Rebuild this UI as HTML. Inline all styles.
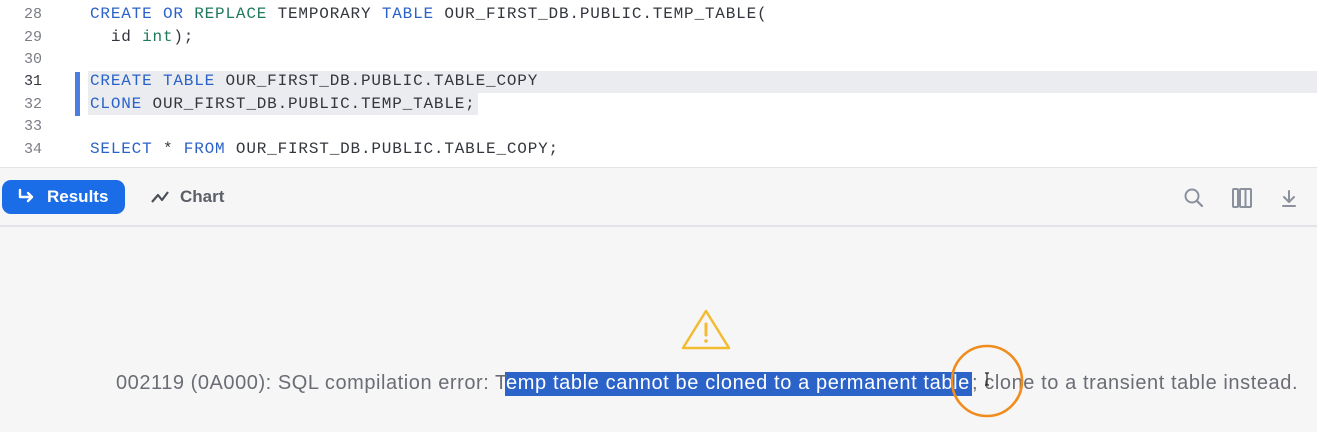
<!DOCTYPE html>
<html><head><meta charset="utf-8"><style>
*{margin:0;padding:0;box-sizing:border-box}
body{width:1317px;height:432px;overflow:hidden;background:#f6f6f7;position:relative;font-family:"Liberation Sans",sans-serif}
.ed{position:absolute;left:0;top:0;width:1317px;height:167px;background:#fff}
.ln{position:absolute;left:0;width:42px;text-align:right;font:15px "Liberation Mono",monospace;color:#7a7d85}
.cd{position:absolute;left:90px;font:16px "Liberation Mono",monospace;letter-spacing:0.82px;color:#33363d;white-space:pre}
.k{color:#2a62c9}.g{color:#1f7a5a}
.hl{position:absolute;background:#ebecf0}
.tb{position:absolute;left:0;top:167px;width:1317px;height:60px;background:#f6f6f7;border-top:1px solid #e2e3e6;border-bottom:2px solid #e2e3e6}
.err{position:absolute;top:371px;font-size:20px;letter-spacing:0.6px;color:#6a6d74;white-space:nowrap;line-height:24px}
</style></head><body>
<div class="ed">
<div class="hl" style="left:88px;top:71px;width:1229px;height:22px"></div>
<div class="hl" style="left:88px;top:93px;width:390px;height:22px"></div>
<div style="position:absolute;left:75px;top:72px;width:5px;height:44px;background:#4a7de0"></div>
<div class="ln" style="top:6px">28</div><div class="ln" style="top:29px">29</div><div class="ln" style="top:51px">30</div><div class="ln" style="top:73px;color:#33363d">31</div><div class="ln" style="top:96px">32</div><div class="ln" style="top:118px">33</div><div class="ln" style="top:141px">34</div>
<div class="cd" style="top:5px"><span class="k">CREATE</span> <span class="k">OR</span> <span class="g">REPLACE</span> TEMPORARY <span class="k">TABLE</span> OUR_FIRST_DB.PUBLIC.TEMP_TABLE(</div>
<div class="cd" style="top:28px">  id <span class="g">int</span>);</div>
<div class="cd" style="top:72px"><span class="k">CREATE</span> <span class="k">TABLE</span> OUR_FIRST_DB.PUBLIC.TABLE_COPY</div>
<div class="cd" style="top:95px"><span class="k">CLONE</span> OUR_FIRST_DB.PUBLIC.TEMP_TABLE;</div>
<div class="cd" style="top:140px"><span class="k">SELECT</span> * <span class="k">FROM</span> OUR_FIRST_DB.PUBLIC.TABLE_COPY;</div>
</div>
<div class="tb">
<div style="position:absolute;left:2px;top:12px;width:123px;height:34px;background:#1a6de6;border-radius:9px;color:#fff;font-weight:bold;font-size:17px;line-height:34px;padding-left:45px">Results</div>
<svg style="position:absolute;left:16px;top:20px" width="20" height="18" viewBox="0 0 20 18"><path d="M4 2v7h12M12 5l4 4-4 4" fill="none" stroke="#fff" stroke-width="2.4" stroke-linecap="round" stroke-linejoin="round"/></svg>
<svg style="position:absolute;left:150px;top:21px" width="20" height="16" viewBox="0 0 20 16"><path d="M2 13l6-7 4 5 6-8" fill="none" stroke="#4b4f57" stroke-width="2.2" stroke-linejoin="round"/></svg>
<div style="position:absolute;left:180px;top:19px;font-weight:bold;font-size:17px;color:#5b5f67">Chart</div>
<svg style="position:absolute;left:1183px;top:19px" width="22" height="22" viewBox="0 0 22 22"><circle cx="9" cy="9" r="6.5" fill="none" stroke="#8a909c" stroke-width="2"/><path d="M14 14l5 5" stroke="#8a909c" stroke-width="2.2" stroke-linecap="round"/></svg>
<svg style="position:absolute;left:1231px;top:19px" width="22" height="22" viewBox="0 0 22 22"><rect x="2" y="2" width="5" height="18" rx="1" fill="none" stroke="#8a909c" stroke-width="2"/><rect x="9" y="2" width="11" height="18" rx="1" fill="none" stroke="#8a909c" stroke-width="2"/><path d="M14.5 2v18" stroke="#8a909c" stroke-width="2"/></svg>
<svg style="position:absolute;left:1280px;top:21px" width="18" height="20" viewBox="0 0 18 20"><path d="M9 2v10M4 8l5 5 5-5M3 17h12" fill="none" stroke="#8a909c" stroke-width="2" stroke-linecap="round" stroke-linejoin="round"/></svg>
</div>
<svg style="position:absolute;left:680px;top:307px" width="52" height="44" viewBox="0 0 52 44"><path d="M26 4L3 41h46z" fill="none" stroke="#f3bb30" stroke-width="2.5" stroke-linejoin="round"/><path d="M26 17v11" stroke="#f3bb30" stroke-width="3" stroke-linecap="round"/><circle cx="26" cy="34" r="1.8" fill="#f3bb30"/></svg>
<div style="position:absolute;left:505px;top:372px;width:467px;height:24px;background:#2c63c8"></div>
<div class="err" style="left:116px;letter-spacing:0.55px">002119 (0A000): SQL compilation error: T</div>
<div class="err" style="left:506px;color:#fff;letter-spacing:0.62px">emp table cannot be cloned to a permanent table</div>
<div class="err" style="left:972px;letter-spacing:0.58px">; clone to a transient table instead.</div>
<svg style="position:absolute;left:948px;top:342px" width="78" height="78" viewBox="0 0 78 78"><circle cx="39" cy="39" r="35" fill="none" stroke="#f08c1c" stroke-width="2.6"/><path d="M37 31h4M39 31v12M37 43h4" stroke="#222" stroke-width="1.2"/></svg>
</body></html>
